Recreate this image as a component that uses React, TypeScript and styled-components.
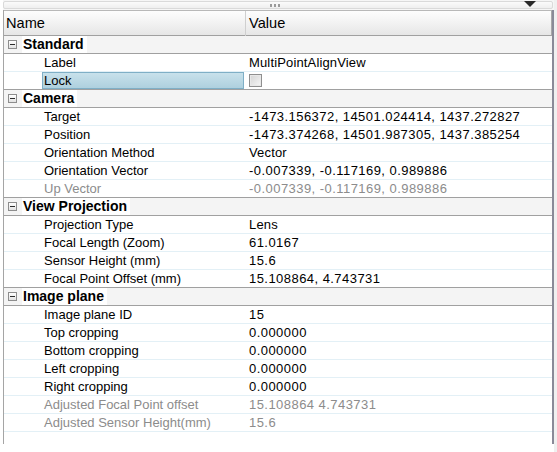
import React from "react";
import styled, { createGlobalStyle, css } from "styled-components";

const GlobalStyle = createGlobalStyle`
  html, body {
    margin: 0;
    padding: 0;
    background: #ffffff;
  }
  body {
    font-family: "Liberation Sans", Arial, sans-serif;
    font-size: 13px;
    color: #000;
  }
`;

type Item = {
  name: string;
  value?: string;
  checkbox?: boolean;
  selected?: boolean;
  disabled?: boolean;
};

type Group = { title: string; items: Item[] };

const groups: Group[] = [
  {
    title: "Standard",
    items: [
      { name: "Label", value: "MultiPointAlignView" },
      { name: "Lock", checkbox: true, selected: true },
    ],
  },
  {
    title: "Camera",
    items: [
      { name: "Target", value: "-1473.156372, 14501.024414, 1437.272827" },
      { name: "Position", value: "-1473.374268, 14501.987305, 1437.385254" },
      { name: "Orientation Method", value: "Vector" },
      { name: "Orientation Vector", value: "-0.007339, -0.117169, 0.989886" },
      { name: "Up Vector", value: "-0.007339, -0.117169, 0.989886", disabled: true },
    ],
  },
  {
    title: "View Projection",
    items: [
      { name: "Projection Type", value: "Lens" },
      { name: "Focal Length (Zoom)", value: "61.0167" },
      { name: "Sensor Height (mm)", value: "15.6" },
      { name: "Focal Point Offset (mm)", value: "15.108864, 4.743731" },
    ],
  },
  {
    title: "Image plane",
    items: [
      { name: "Image plane ID", value: "15" },
      { name: "Top cropping", value: "0.000000" },
      { name: "Bottom cropping", value: "0.000000" },
      { name: "Left cropping", value: "0.000000" },
      { name: "Right cropping", value: "0.000000" },
      { name: "Adjusted Focal Point offset", value: "15.108864 4.743731", disabled: true },
      { name: "Adjusted Sensor Height(mm)", value: "15.6", disabled: true },
    ],
  },
];

const isNumeric = (v: string) => /^[-0-9., ]+$/.test(v);

const App = () => {
  return (
    <Page>
      <GlobalStyle />
      <Panel>
        <TopStrip>
          <StripBox>
            <Grip>
              <i />
              <i />
              <i />
            </Grip>
            <DropArrow />
          </StripBox>
        </TopStrip>
        <Grid>
          <Header>
            <HeaderCell>Name</HeaderCell>
            <HeaderCell $value>Value</HeaderCell>
          </Header>
          {groups.map((group, gi) => (
            <Section key={group.title}>
              <GroupRow>
                <Expander />
                <GroupTitle>{group.title}</GroupTitle>
              </GroupRow>
              {group.items.map((item, ii) => (
                <ItemRow
                  key={item.name}
                  $closing={ii === group.items.length - 1 && gi < groups.length - 1}
                >
                  <NameCell $selected={item.selected} $disabled={item.disabled}>
                    {item.name}
                  </NameCell>
                  <ValueCell
                    $disabled={item.disabled}
                    $numeric={item.value ? isNumeric(item.value) : false}
                  >
                    {item.checkbox ? <CheckBox /> : item.value}
                  </ValueCell>
                </ItemRow>
              ))}
            </Section>
          ))}
        </Grid>
      </Panel>
      <Gutter />
    </Page>
  );
};

export default App;

const Page = styled.div`
  display: flex;
  width: 557px;
  height: 452px;
  padding-left: 3px;
  box-sizing: border-box;
  background: #ffffff;
  overflow: hidden;
`;

const Panel = styled.div`
  width: 551px;
  height: 444px;
  display: flex;
  flex-direction: column;
`;

const TopStrip = styled.div`
  height: 10px;
  padding: 1px 1px 1px 0;
  box-sizing: border-box;
  background: #f6f6f6;
`;

const StripBox = styled.div`
  position: relative;
  height: 100%;
  border: 1px solid #dadada;
  border-radius: 2px;
  background: linear-gradient(#fbfbfb, #efefef);
  box-sizing: border-box;
`;

const Grip = styled.div`
  position: absolute;
  left: 266px;
  top: 2px;
  display: flex;
  gap: 2px;

  i {
    display: block;
    width: 2px;
    height: 3px;
    background: #9a9a9a;
  }
`;

const DropArrow = styled.div`
  position: absolute;
  right: 16px;
  top: -1px;
  width: 0;
  height: 0;
  border-left: 6px solid transparent;
  border-right: 6px solid transparent;
  border-top: 6px solid #2a2a2a;
`;

const Grid = styled.div`
  flex: 1;
  border-left: 1px solid #a5a5a5;
  border-right: 2px solid #8a8a98;
  display: flex;
  flex-direction: column;
`;

const Header = styled.div`
  display: grid;
  grid-template-columns: 241px 1fr;
  height: 26px;
  box-sizing: border-box;
  border-top: 1px solid #b8b8b8;
  border-bottom: 1px solid #a0a0a0;
  border-right: 1px solid #a8a8a8;
  background: linear-gradient(#fdfdfd, #f2f2f2 50%, #e6e6e6);
`;

const HeaderCell = styled.div<{ $value?: boolean }>`
  font-size: 14.6px;
  line-height: 25px;
  padding-left: 2px;
  color: #000;
  ${(p) =>
    p.$value &&
    css`
      border-left: 1px solid #cfcfcf;
      padding-left: 3px;
    `}
`;

const Section = styled.div`
  display: flex;
  flex-direction: column;
`;

const GroupRow = styled.div`
  display: flex;
  align-items: center;
  height: 18px;
  box-sizing: border-box;
  border-bottom: 1px solid #a0a0a0;
  background: #f4f4f4;
`;

const Expander = styled.span`
  position: relative;
  width: 9px;
  height: 9px;
  margin-left: 4px;
  margin-right: 5px;
  border: 1px solid #8d8d8d;
  box-sizing: border-box;
  background: linear-gradient(#ffffff, #e2e2e2);

  &::after {
    content: "";
    position: absolute;
    left: 1px;
    right: 1px;
    top: 3px;
    height: 1px;
    background: #2c2c2c;
  }
`;

const GroupTitle = styled.span`
  font-weight: bold;
  font-size: 14px;
  line-height: 17px;
  background: #ffffff;
  padding-right: 3px;
  padding-left: 1px;
`;

const ItemRow = styled.div<{ $closing?: boolean }>`
  display: grid;
  grid-template-columns: 242px 1fr;
  height: 18px;
  box-sizing: border-box;
  border-bottom: 1px solid ${(p) => (p.$closing ? "#a0a0a0" : "#e3f0f6")};
`;

const NameCell = styled.div<{ $selected?: boolean; $disabled?: boolean }>`
  padding-left: 40px;
  line-height: 17px;
  white-space: nowrap;
  color: ${(p) => (p.$disabled ? "#8c8c8c" : "#000")};
  ${(p) =>
    p.$selected &&
    css`
      margin-left: 38px;
      margin-right: 2px;
      padding-left: 1px;
      border: 1px solid #7fafc6;
      line-height: 15px;
      background: linear-gradient(#c8e1eb, #aed0de);
    `}
`;

const ValueCell = styled.div<{ $disabled?: boolean; $numeric?: boolean }>`
  display: flex;
  align-items: center;
  padding-left: 3px;
  white-space: nowrap;
  line-height: 17px;
  color: ${(p) => (p.$disabled ? "#8c8c8c" : "#000")};
  letter-spacing: ${(p) => (p.$numeric ? "0.45px" : "0.15px")};
`;

const CheckBox = styled.span`
  width: 13px;
  height: 13px;
  box-sizing: border-box;
  border: 1px solid #8f8f8f;
  background: linear-gradient(135deg, #d4d4d4, #f6f6f6);
  box-shadow: inset 0 0 0 1px #e8e8e8;
`;

const Gutter = styled.div`
  width: 3px;
  height: 452px;
  background: #f0f0f0;
`;
